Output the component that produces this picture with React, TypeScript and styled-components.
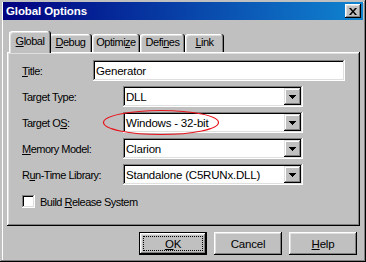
import React from 'react';
import styled, { createGlobalStyle } from 'styled-components';

const GlobalStyle = createGlobalStyle`
	html, body {
		margin: 0;
		padding: 0;
		background: #c0c0c0;
	}
	body {
		font-family: "Liberation Sans", Arial, sans-serif;
		font-size: 11px;
		letter-spacing: -0.5px;
		color: #000;
	}
`;

function Key({ children }: { children: React.ReactNode }) {
	return <u>{children}</u>;
}

function Select({ value }: { value: string }) {
	return (
		<Field $width={180}>
			<FieldText>{value}</FieldText>
			<DropButton>
				<svg width="7" height="4" viewBox="0 0 7 4">
					<path d="M0 0h7v1h-1v1h-1v1h-1v1h-1v-1h-1v-1h-1v-1h-1z" fill="#000" />
				</svg>
			</DropButton>
		</Field>
	);
}

const tabs = [
	{ label: <><Key>G</Key>lobal</>, width: 38, active: true },
	{ label: <><Key>D</Key>ebug</>, width: 43 },
	{ label: <>Optimi<Key>z</Key>e</>, width: 48 },
	{ label: <>Defi<Key>n</Key>es</>, width: 45 },
	{ label: <><Key>L</Key>ink</>, width: 39 },
];

function App() {
	return (
		<>
			<GlobalStyle />
			<Window>
				<TitleBar>
					<Caption>Global Options</Caption>
					<CloseButton>
						<svg width="8" height="7" viewBox="0 0 8 7">
							<path d="M0 0h2l2 2.5L6 0h2L5 3.5 8 7H6L4 4.5 2 7H0l3-3.5z" fill="#000" />
						</svg>
					</CloseButton>
				</TitleBar>
				<Body>
					<TabStrip>
						{tabs.map((t, i) => (
							<Tab key={i} $width={t.width} $active={!!t.active}>{t.label}</Tab>
						))}
					</TabStrip>
					<Panel>
						<Row>
							<Label $width={71}><Key>T</Key>itle:</Label>
							<Field $width={252}>
								<FieldText>Generator</FieldText>
							</Field>
						</Row>
						<Row>
							<Label $width={101}>Tar<Key>g</Key>et Type:</Label>
							<Select value="DLL" />
						</Row>
						<Row>
							<Label $width={101}>Target O<Key>S</Key>:</Label>
							<Select value="Windows - 32-bit" />
						</Row>
						<Row>
							<Label $width={101}><Key>M</Key>emory Model:</Label>
							<Select value="Clarion" />
						</Row>
						<Row>
							<Label $width={101}>R<Key>u</Key>n-Time Library:</Label>
							<Select value="Standalone (C5RUNx.DLL)" />
						</Row>
						<CheckRow>
							<CheckBox />
							<span>Build <Key>R</Key>elease System</span>
						</CheckRow>
						<Highlight width="118" height="27" viewBox="0 0 118 27">
							<ellipse cx="59" cy="13.5" rx="57.5" ry="12" fill="none" stroke="#e8141c" strokeWidth="1.2" />
						</Highlight>
					</Panel>
					<ButtonRow>
						<Button $default>
							<Focus><Key>O</Key>K</Focus>
						</Button>
						<Button>Cancel</Button>
						<Button><Key>H</Key>elp</Button>
					</ButtonRow>
				</Body>
			</Window>
		</>
	);
}

const Window = styled.div`
	box-sizing: border-box;
	width: 366px;
	height: 262px;
	padding: 2px 3px 3px 3px;
	background: #c0c0c0;
	display: flex;
	flex-direction: column;
	box-shadow: inset -1px -1px #000, inset 1px 1px #c0c0c0, inset -2px -2px #808080, inset 2px 2px #c0c0c0, inset 3px 3px #fff;
`

const TitleBar = styled.div`
	height: 18px;
	display: flex;
	align-items: center;
	justify-content: space-between;
	padding: 0 2px 0 3px;
	background: linear-gradient(to right, #000080, #1084d0);
`

const Caption = styled.div`
	color: #fff;
	font-weight: 700;
	font-size: 11.5px;
	letter-spacing: -0.1px;
`

const CloseButton = styled.div`
	box-sizing: border-box;
	width: 16px;
	height: 14px;
	display: flex;
	align-items: center;
	justify-content: center;
	background: #c0c0c0;
	box-shadow: inset -1px -1px #000, inset 1px 1px #fff, inset -2px -2px #808080, inset 2px 2px #dfdfdf;
`

const Body = styled.div`
	display: flex;
	flex-direction: column;
	padding: 11px 3px 0 4px;
`

const TabStrip = styled.div`
	display: flex;
	align-items: flex-end;
	height: 21px;
	padding-left: 4px;
	position: relative;
	z-index: 1;
`

const Tab = styled.div<{ $width: number; $active: boolean }>`
	box-sizing: border-box;
	width: ${p => p.$width + (p.$active ? 4 : 0)}px;
	height: ${p => (p.$active ? 22 : 18)}px;
	margin: 0 ${p => (p.$active ? -2 : 0)}px ${p => (p.$active ? -1 : 0)}px;
	padding-top: ${p => (p.$active ? 4 : 2)}px;
	text-align: center;
	background: #c0c0c0;
	border-radius: 3px 3px 0 0;
	position: relative;
	z-index: ${p => (p.$active ? 2 : 1)};
	box-shadow: inset -1px 0 #000, inset 1px 1px #fff, inset -2px 0 #808080, inset 2px 2px #dfdfdf;
`

const Panel = styled.div`
	box-sizing: border-box;
	position: relative;
	height: 174px;
	padding: 8px 15px 0 15px;
	display: flex;
	flex-direction: column;
	gap: 5px;
	box-shadow: inset -1px -1px #000, inset 1px 1px #fff, inset -2px -2px #808080, inset 2px 2px #dfdfdf;
`

const Row = styled.div`
	display: flex;
	align-items: center;
`

const Label = styled.div<{ $width: number }>`
	width: ${p => p.$width}px;
`

const Field = styled.div<{ $width: number }>`
	box-sizing: border-box;
	width: ${p => p.$width}px;
	height: 21px;
	display: flex;
	align-items: center;
	justify-content: space-between;
	padding: 2px;
	background: #fff;
	box-shadow: inset -1px -1px #fff, inset 1px 1px #808080, inset -2px -2px #dfdfdf, inset 2px 2px #000;
`

const FieldText = styled.span`
	padding-left: 1px;
	font-size: 11.5px;
	letter-spacing: -0.2px;
`

const DropButton = styled.div`
	box-sizing: border-box;
	width: 17px;
	height: 17px;
	display: flex;
	align-items: center;
	justify-content: center;
	background: #c0c0c0;
	box-shadow: inset -1px -1px #000, inset 1px 1px #dfdfdf, inset -2px -2px #808080, inset 2px 2px #fff;
`

const CheckRow = styled.div`
	display: flex;
	align-items: center;
	gap: 5px;
	margin: 5px 0 0 0;
`

const CheckBox = styled.div`
	box-sizing: border-box;
	width: 13px;
	height: 13px;
	background: #fff;
	box-shadow: inset -1px -1px #fff, inset 1px 1px #808080, inset -2px -2px #dfdfdf, inset 2px 2px #000;
`

const Highlight = styled.svg`
	position: absolute;
	left: 95px;
	top: 57px;
`

const ButtonRow = styled.div`
	display: flex;
	justify-content: flex-end;
	gap: 7px;
	padding: 6px 3px 0 0;
`

const Button = styled.div<{ $default?: boolean }>`
	box-sizing: border-box;
	width: 68px;
	height: 23px;
	display: flex;
	align-items: center;
	justify-content: center;
	padding: 4px;
	font-size: 11.5px;
	letter-spacing: -0.2px;
	background: #c0c0c0;
	box-shadow: ${p =>
		p.$default
			? 'inset -1px -1px #000, inset 1px 1px #000, inset -2px -2px #000, inset 2px 2px #fff, inset -3px -3px #808080, inset 3px 3px #dfdfdf'
			: 'inset -1px -1px #000, inset 1px 1px #fff, inset -2px -2px #808080, inset 2px 2px #dfdfdf'};
`

const Focus = styled.div`
	box-sizing: border-box;
	width: 100%;
	height: 100%;
	display: flex;
	align-items: center;
	justify-content: center;
	border: 1px dotted #000;
`

export default App;
